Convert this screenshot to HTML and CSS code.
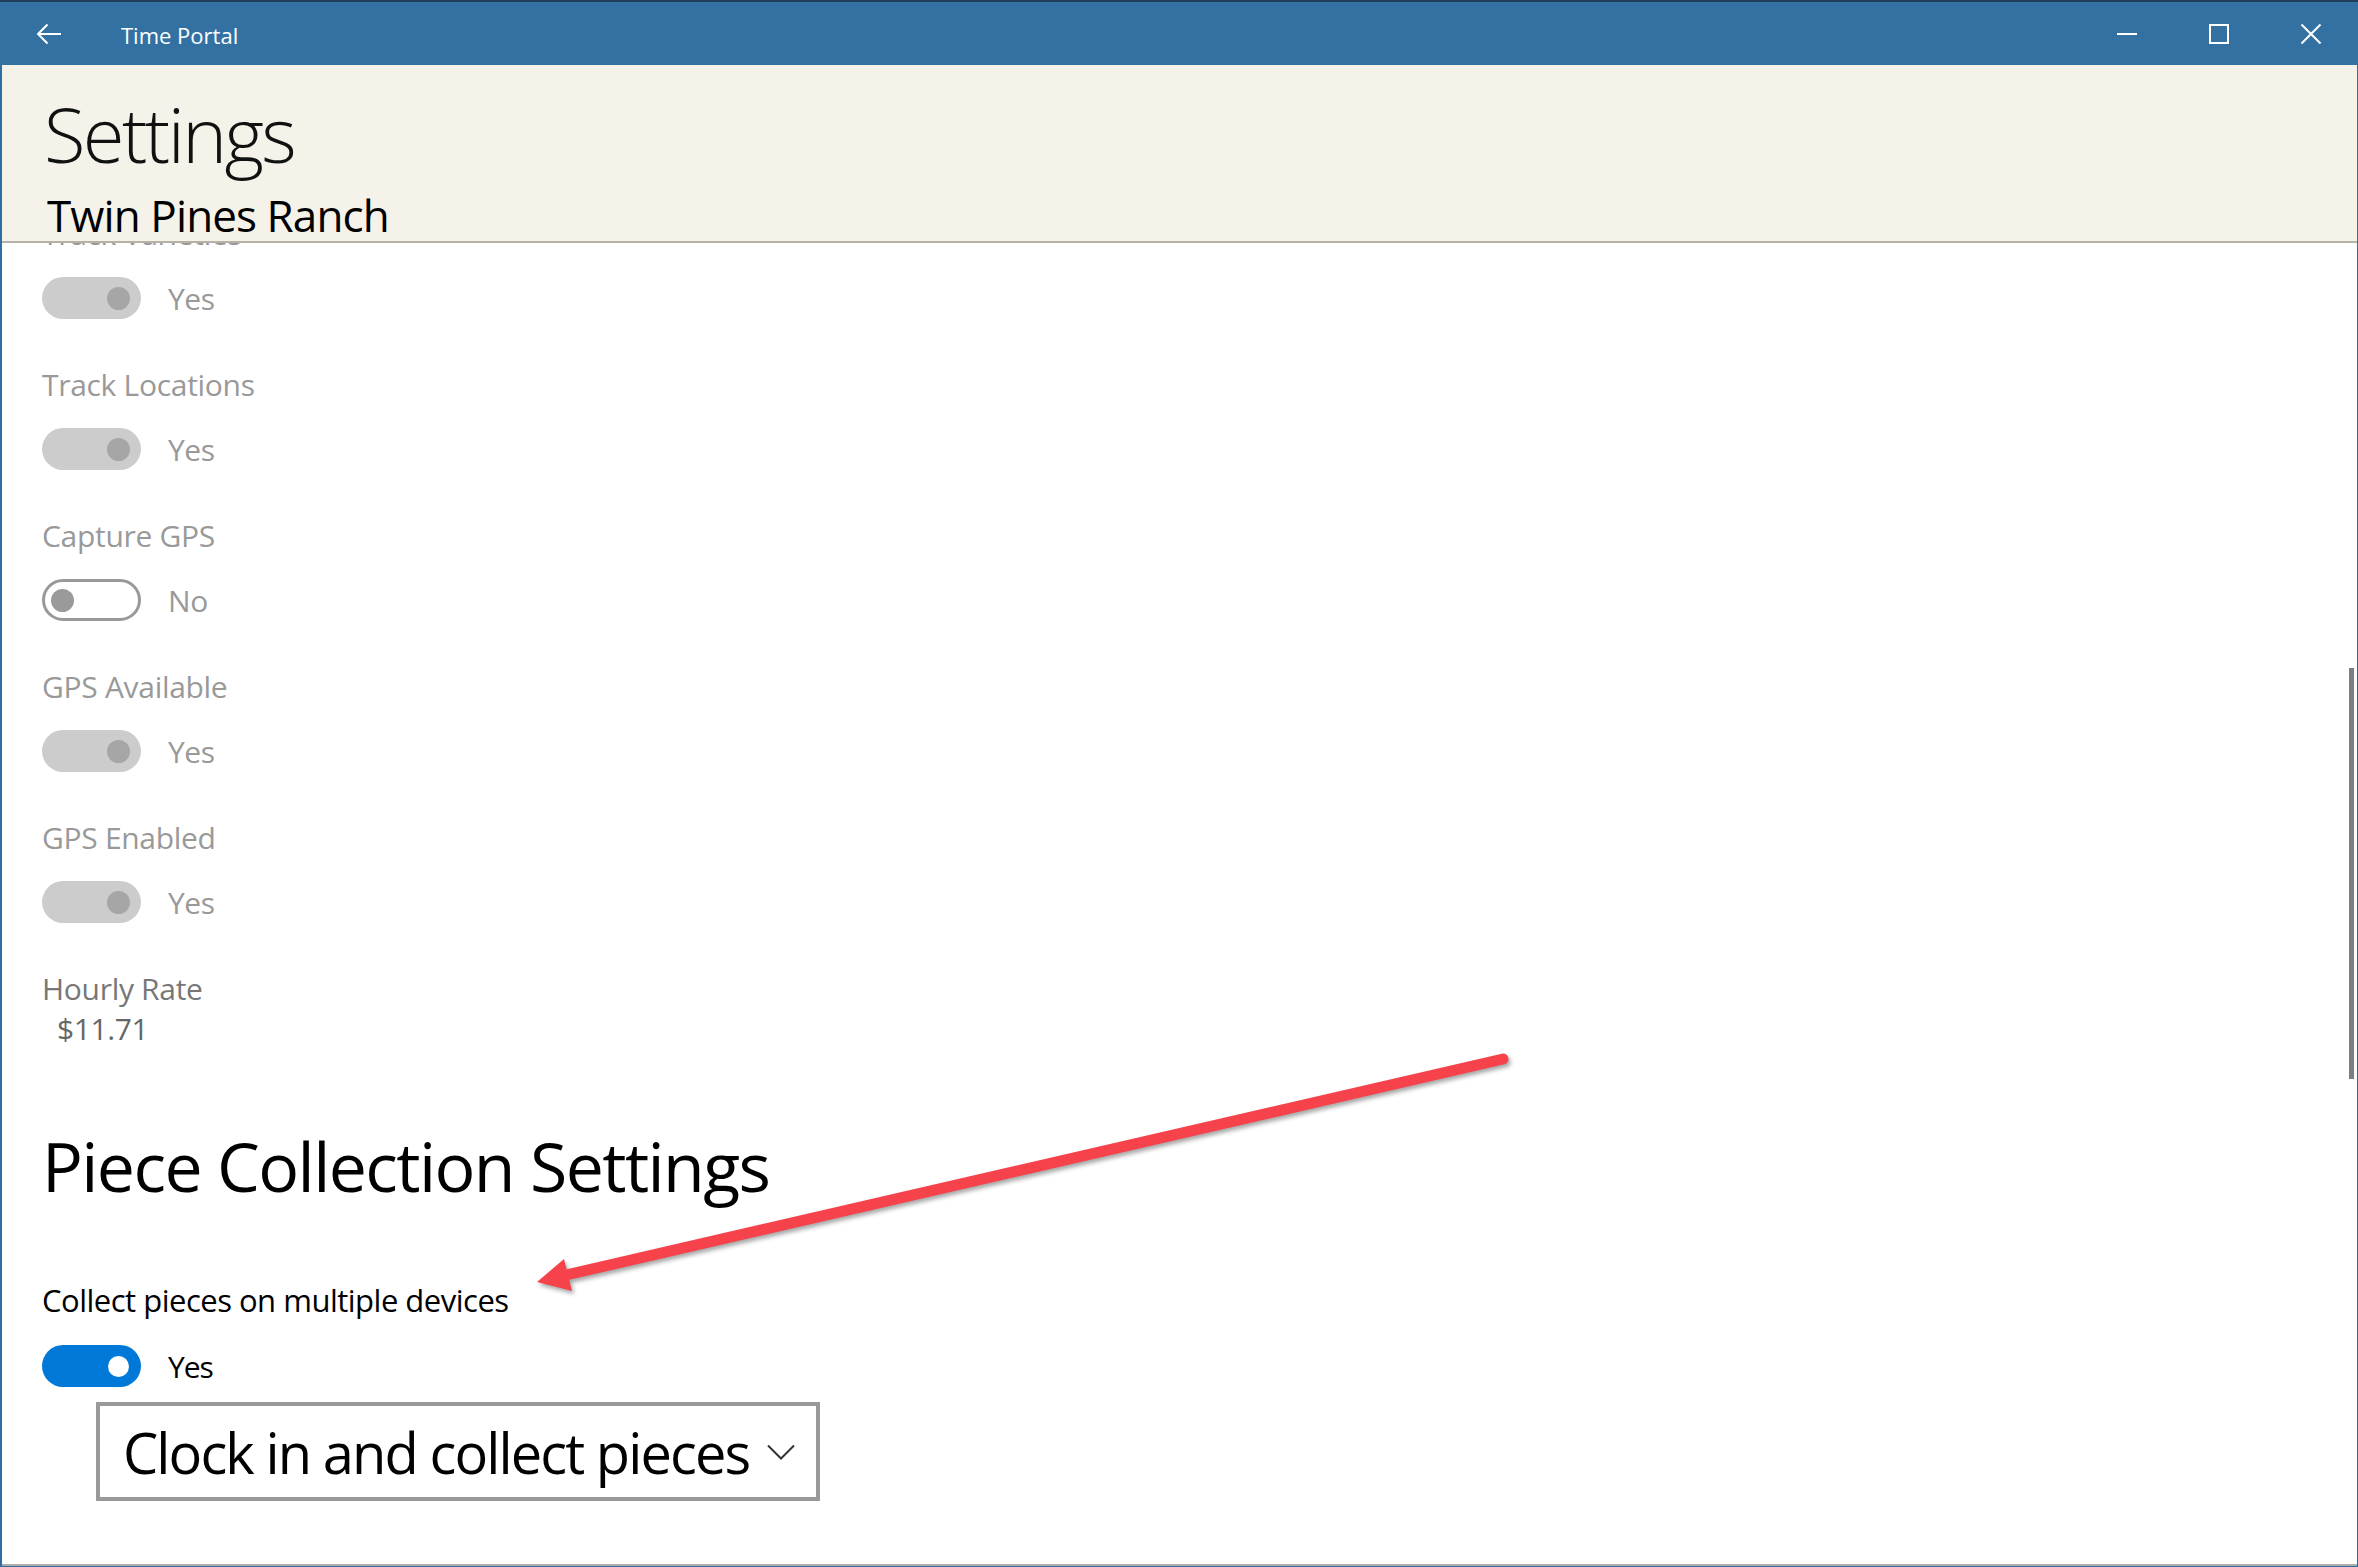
FILE: index.html
```html
<!DOCTYPE html>
<html lang="en">
<head>
    <meta charset="UTF-8">
    <meta name="viewport" content="width=device-width, initial-scale=1.0">
    <title>Time Portal</title>
    <link rel="stylesheet" href="styles.css">
</head>
<body>
    <div class="window">
        <div class="titlebar">
            <div class="back-btn">
                <svg width="26" height="22" viewBox="0 0 26 22"><path d="M25 11H2M11.5 1.5L2 11l9.5 9.5" fill="none" stroke="#fff" stroke-width="2"/></svg>
            </div>
            <div class="app-title">Time Portal</div>
            <div class="win-controls">
                <div class="win-btn"><svg width="22" height="22" viewBox="0 0 22 22"><path d="M1 11h20" stroke="#fff" stroke-width="2"/></svg></div>
                <div class="win-btn"><svg width="22" height="22" viewBox="0 0 22 22"><rect x="2" y="2" width="18" height="18" fill="none" stroke="#fff" stroke-width="2"/></svg></div>
                <div class="win-btn"><svg width="22" height="22" viewBox="0 0 22 22"><path d="M1.5 1.5l19 19M20.5 1.5l-19 19" stroke="#fff" stroke-width="2"/></svg></div>
            </div>
        </div>

        <div class="page">
            <div class="header">
                <h1>Settings</h1>
                <div class="ranch">Twin Pines Ranch</div>
            </div>

            <div class="content">
                <div class="content-inner">
                    <div class="field-label">Track Varieties</div>
                    <div class="toggle-row">
                        <span class="toggle dis-on"><span class="knob"></span></span>
                        <span class="toggle-text">Yes</span>
                    </div>

                    <div class="field-label">Track Locations</div>
                    <div class="toggle-row">
                        <span class="toggle dis-on"><span class="knob"></span></span>
                        <span class="toggle-text">Yes</span>
                    </div>

                    <div class="field-label">Capture GPS</div>
                    <div class="toggle-row">
                        <span class="toggle dis-off"><span class="knob"></span></span>
                        <span class="toggle-text">No</span>
                    </div>

                    <div class="field-label">GPS Available</div>
                    <div class="toggle-row">
                        <span class="toggle dis-on"><span class="knob"></span></span>
                        <span class="toggle-text">Yes</span>
                    </div>

                    <div class="field-label">GPS Enabled</div>
                    <div class="toggle-row">
                        <span class="toggle dis-on"><span class="knob"></span></span>
                        <span class="toggle-text">Yes</span>
                    </div>

                    <div class="field-label rate-label">Hourly Rate</div>
                    <div class="rate-value">$11.71</div>

                    <h2>Piece Collection Settings</h2>

                    <div class="field-label active">Collect pieces on multiple devices</div>
                    <div class="toggle-row on-row">
                        <span class="toggle on"><span class="knob"></span></span>
                        <span class="toggle-text active">Yes</span>
                    </div>

                    <div class="dropdown">
                        <span class="dropdown-text">Clock in and collect pieces</span>
                        <svg class="chevron" width="28" height="16" viewBox="0 0 28 16"><path d="M1 1.5l13 13 13-13" fill="none" stroke="#333" stroke-width="2"/></svg>
                    </div>
                </div>
                <div class="scrollbar"></div>
            </div>
        </div>

        <svg class="annotation" width="2358" height="1567" viewBox="0 0 2358 1567">
            <g class="arrow">
                <line x1="1503" y1="1059" x2="566" y2="1275" stroke="#f6434b" stroke-width="11" stroke-linecap="round"/>
                <polygon points="537,1282 564,1259 572,1291" fill="#f6434b"/>
            </g>
        </svg>
    </div>
</body>
</html>
```

FILE: styles.css
```css
* { box-sizing: border-box; }
html, body { margin: 0; padding: 0; }
body { font-family: "Open Sans", "Noto Sans", Arial, sans-serif; background: #fff; overflow: hidden; }

.window { position: relative; width: 2358px; height: 1567px; display: flex; flex-direction: column; }

.titlebar { height: 65px; flex: none; display: flex; align-items: center; background: #3371a3; border-top: 2px solid #1f3d5b; color: #fff; }
.back-btn { width: 96px; height: 100%; display: flex; align-items: center; justify-content: center; padding-left: 2px; }
.app-title { font-size: 22px; padding-left: 25px; padding-top: 2px; }
.win-controls { margin-left: auto; display: flex; height: 100%; margin-right: 1px; }
.win-btn { width: 92px; display: flex; align-items: center; justify-content: center; }

.page { flex: 1; display: flex; flex-direction: column; min-height: 0; border-left: 2px solid #2f6ea3; border-right: 1px solid #2f6ea3; border-bottom: 1px solid #2f6ea3; }

.header { position: relative; z-index: 1; height: 178px; flex: none; background: #f5f2ea; border-bottom: 2px solid #b6b2a8; padding-left: 42px; }
.header h1 { margin: 0; font-weight: 300; font-size: 76px; line-height: 90px; padding-top: 24px; letter-spacing: -2.6px; color: #111; }
.ranch { font-size: 44px; line-height: 50px; margin-top: 11px; padding-left: 3px; color: #000; letter-spacing: -0.9px; }

.content { position: relative; flex: 1; overflow: hidden; border-bottom: 2px solid #afada5; padding-left: 40px; }
.content-inner { margin-top: -29px; }

.field-label { font-size: 30px; line-height: 40px; color: #999; letter-spacing: -0.3px; }
.field-label.active { color: #000; font-size: 31px; letter-spacing: -0.5px; margin-top: 69px; }
.toggle-row { display: flex; align-items: center; height: 42px; margin: 23px 0 46px; }
.on-row { margin: 25px 0 0; }

.toggle { position: relative; display: block; width: 99px; height: 42px; border-radius: 21px; }
.knob { position: absolute; top: 50%; width: 23px; height: 23px; margin-top: -11.5px; border-radius: 50%; }
.dis-on { background: #cccccc; }
.dis-on .knob { right: 11px; background: #a6a6a6; }
.dis-off { border: 3px solid #999; background: #fff; }
.dis-off .knob { left: 6px; background: #9a9a9a; }
.on { background: #0078d7; }
.on .knob { right: 12px; width: 21px; height: 21px; margin-top: -10.5px; background: #fff; }

.toggle-text { margin-left: 27px; font-size: 30px; color: #999; letter-spacing: -0.4px; }
.toggle-text.active { color: #000; letter-spacing: -1px; }

.rate-label { color: #777; }
.rate-value { font-size: 30px; line-height: 40px; color: #666; padding-left: 15px; letter-spacing: -0.4px; }

h2 { margin: 72px 0 0; font-weight: 400; font-size: 68px; line-height: 90px; letter-spacing: -1.6px; color: #000; }

.dropdown { display: flex; align-items: center; width: 724px; height: 99px; margin: 15px 0 0 54px; border: 4px solid #999; background: #fff; padding-left: 23px; }
.dropdown-text { font-size: 56px; letter-spacing: -1.9px; color: #000; line-height: 1; }
.chevron { margin-left: auto; margin-right: 21px; }

.scrollbar { position: absolute; right: 3px; top: 425px; width: 5px; height: 411px; background: #7d7d7d; }

.annotation { position: absolute; left: 0; top: 0; pointer-events: none; }
.arrow { filter: drop-shadow(2px 3px 2px rgba(0,0,0,0.35)); }
```
